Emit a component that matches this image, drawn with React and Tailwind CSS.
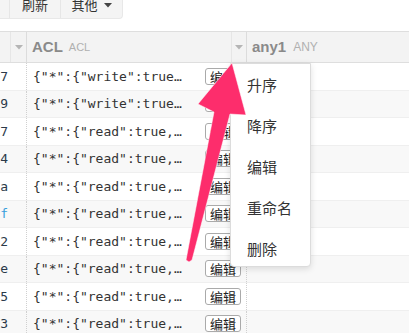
import React from "react";

const rows = [
  { id: "7", acl: '{"*":{"write":true…' },
  { id: "9", acl: '{"*":{"write":true…' },
  { id: "7", acl: '{"*":{"read":true,…' },
  { id: "4", acl: '{"*":{"read":true,…' },
  { id: "a", acl: '{"*":{"read":true,…' },
  { id: "f", acl: '{"*":{"read":true,…', light: true },
  { id: "2", acl: '{"*":{"read":true,…' },
  { id: "e", acl: '{"*":{"read":true,…' },
  { id: "5", acl: '{"*":{"read":true,…' },
  { id: "3", acl: '{"*":{"read":true,…' },
];

const menu = ["升序", "降序", "编辑", "重命名", "删除"];

function Caret({ color = "#b5b5b5" }) {
  return (
    <svg width="8" height="5" viewBox="0 0 8 5">
      <path d="M0 0h8L4 4.5z" fill={color} />
    </svg>
  );
}

function Toolbar() {
  return (
    <div className="flex h-[19px] overflow-hidden text-[13px] text-[#333] font-['Liberation_Sans','Noto_Sans_CJK_SC',sans-serif]">
      <div className="flex bg-[#f4f4f4] rounded-br-[4px] border-b border-r border-[#e8e8e8]">
        <div className="w-[10px] border-r border-[#e6e6e6]" />
        <div className="w-[51px] border-r border-[#e6e6e6] flex justify-center">
          <span className="leading-[13px] -mt-[1px]">刷新</span>
        </div>
        <div className="w-[61px] flex justify-center gap-[6px]">
          <span className="leading-[13px] -mt-[1px]">其他</span>
          <span className="mt-[3px]">
            <Caret color="#444" />
          </span>
        </div>
      </div>
    </div>
  );
}

function Header() {
  return (
    <div className="mt-[12px] flex h-[32px] bg-[#f3f3f3] border-t border-b border-[#dedede] font-['Liberation_Sans',sans-serif]">
      <div className="w-[10px] shrink-0" />
      <div className="w-[17px] shrink-0 border-l border-r border-l-[#e6e6e6] border-r-[#dcdcdc] flex items-center justify-center">
        <Caret />
      </div>
      <div className="w-[204px] shrink-0 flex items-center gap-[6px] pl-[5px]">
        <span className="text-[15px] font-bold text-[#8a8a8a]">ACL</span>
        <span className="text-[11px] text-[#b0b0b0]">ACL</span>
      </div>
      <div className="w-[16px] shrink-0 border-l border-r border-l-[#e6e6e6] border-r-[#dcdcdc] flex items-center justify-center">
        <Caret />
      </div>
      <div className="flex items-center gap-[7px] pl-[5px]">
        <span className="text-[15px] font-bold text-[#8a8a8a]">any1</span>
        <span className="text-[12px] text-[#b0b0b0]">ANY</span>
      </div>
    </div>
  );
}

function Row({ row, index }) {
  return (
    <div
      className={
        "flex h-[27.5px] items-center border-b border-[#efefef] " +
        (index % 2 === 1 ? "bg-[#f8f8f8]" : "bg-white")
      }
    >
      <div className="w-[27px] shrink-0 h-full flex items-center justify-end pr-[18px] border-r border-dotted border-[#d0d0d0] overflow-hidden">
        <span
          className={
            "text-[13px] font-['DejaVu_Sans_Mono',monospace] " +
            (row.light ? "text-[#3aa0dc]" : "text-[#2b3a4a]")
          }
        >
          {row.id}
        </span>
      </div>
      <div className="w-[220px] shrink-0 h-full flex items-center justify-between pl-[6px] pr-[5px] border-r border-dotted border-[#d0d0d0]">
        <span className="text-[13px] text-[#333] whitespace-pre font-['DejaVu_Sans_Mono',monospace]">
          {row.acl}
        </span>
        <button className="h-[17px] px-[4px] bg-white border border-[#aaa] rounded-[3px] text-[13px] leading-[15px] text-[#222] font-['Noto_Sans_CJK_SC',sans-serif]">
          编辑
        </button>
      </div>
      <div className="flex-1" />
    </div>
  );
}

export default function App() {
  return (
    <div className="relative w-[409px] h-[333px] overflow-hidden bg-white">
      <Toolbar />
      <Header />
      <div>
        {rows.map((row, i) => (
          <Row key={i} row={row} index={i} />
        ))}
      </div>

      <div className="absolute left-[230px] top-[63px] w-[81px] h-[204px] bg-white border border-[#dcdcdc] rounded-b-[4px] shadow-[0_2px_6px_rgba(0,0,0,0.12)] pt-[1px] font-['Noto_Sans_CJK_SC',sans-serif]">
        {menu.map((m) => (
          <div key={m} className="h-[41px] flex items-center pl-[16px] text-[15px] text-[#333]">
            {m}
          </div>
        ))}
      </div>

      <svg className="absolute left-0 top-0" width="409" height="333" viewBox="0 0 409 333">
        <polygon
          points="232,63 246,115 230,114 192,260 189,262 186,260 214,112 198,104"
          fill="#fd2d6c"
          stroke="#ffffff"
          strokeOpacity="0.5"
          strokeWidth="1"
          strokeLinejoin="round"
        />
      </svg>
    </div>
  );
}
